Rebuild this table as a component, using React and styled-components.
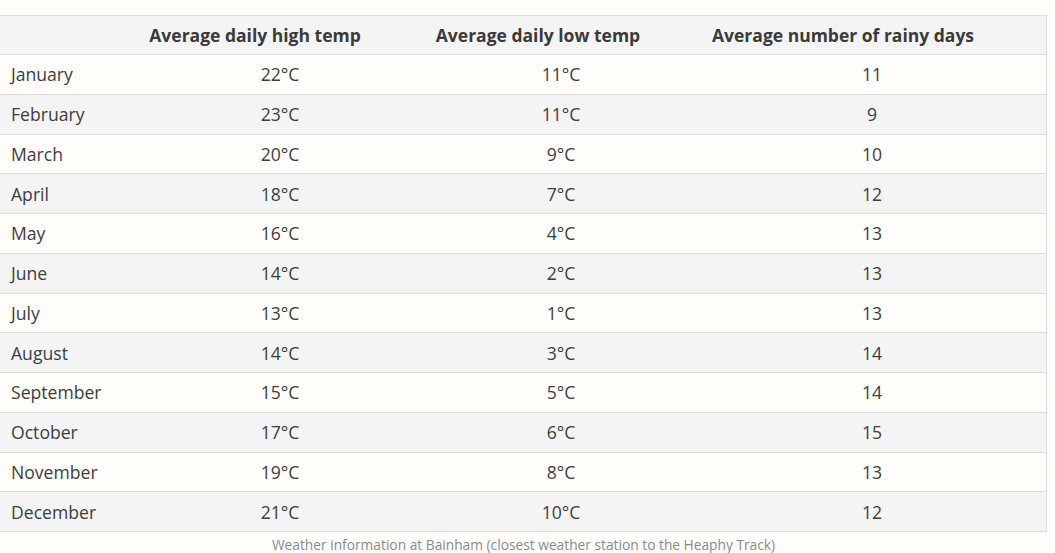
import styled, { createGlobalStyle } from 'styled-components'

const GlobalStyle = createGlobalStyle`
  html, body {
    margin: 0;
    padding: 0;
    background: #fffdfa;
  }
  body {
    font-family: "Open Sans", "Liberation Sans", sans-serif;
    color: #3d3d3d;
  }
`

const months = [
    ['January', '22°C', '11°C', '11'],
    ['February', '23°C', '11°C', '9'],
    ['March', '20°C', '9°C', '10'],
    ['April', '18°C', '7°C', '12'],
    ['May', '16°C', '4°C', '13'],
    ['June', '14°C', '2°C', '13'],
    ['July', '13°C', '1°C', '13'],
    ['August', '14°C', '3°C', '14'],
    ['September', '15°C', '5°C', '14'],
    ['October', '17°C', '6°C', '15'],
    ['November', '19°C', '8°C', '13'],
    ['December', '21°C', '10°C', '12'],
]

const App = () => {
    return (
        <>
            <GlobalStyle />
            <Page>
                <Table>
                    <HeadRow>
                        <HeadCell />
                        <HeadCell shift={50}>Average daily high temp</HeadCell>
                        <HeadCell shift={46}>Average daily low temp</HeadCell>
                        <HeadCell shift={72}>Average number of rainy days</HeadCell>
                    </HeadRow>
                    {months.map((m, i) => (
                        <Row key={m[0]} striped={i % 2 === 1}>
                            <MonthCell>{m[0]}</MonthCell>
                            <Cell>{m[1]}</Cell>
                            <Cell>{m[2]}</Cell>
                            <Cell shift={14}>{m[3]}</Cell>
                        </Row>
                    ))}
                </Table>
                <Caption>Weather information at Bainham (closest weather station to the Heaphy Track)</Caption>
            </Page>
        </>
    )
}

export default App

const Page = styled.div`
  padding-top: 15px;
  width: 1047px;
`

const Table = styled.div`
  border-top: 1px solid #dcdcdc;
  border-right: 1px solid #dcdcdc;
  border-bottom: 1px solid #dcdcdc;
`

const columns = '150px 260px 302px 1fr'

const HeadRow = styled.div`
  display: grid;
  grid-template-columns: ${columns};
  height: 38px;
  background: #f4f4f5;
  border-bottom: 1px solid #dcdcdc;
`

const HeadCell = styled.div`
  display: flex;
  align-items: center;
  justify-content: center;
  padding-right: ${p => p.shift || 0}px;
  font-weight: 700;
  font-size: 17.5px;
  white-space: nowrap;
  color: #3a3a3a;
`

const Row = styled.div`
  display: grid;
  grid-template-columns: ${columns};
  height: 38.75px;
  background: ${p => (p.striped ? '#f4f4f5' : '#fffdfa')};
  & + & {
    border-top: 1px solid #dcdcdc;
  }
`

const MonthCell = styled.div`
  display: flex;
  align-items: center;
  padding-left: 11px;
  font-size: 17.6px;
`

const Cell = styled.div`
  display: flex;
  align-items: center;
  justify-content: center;
  padding-right: ${p => p.shift || 0}px;
  font-size: 17.6px;
`

const Caption = styled.div`
  text-align: center;
  font-size: 13.75px;
  color: #8a8a8a;
  padding-top: 3px;
`
